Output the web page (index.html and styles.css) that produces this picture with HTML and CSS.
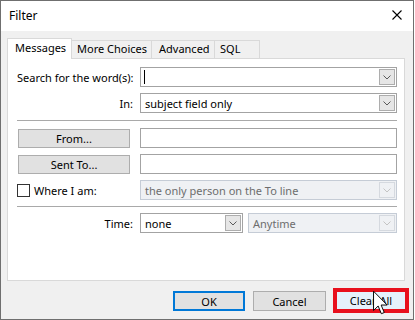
FILE: index.html
```html
<!DOCTYPE html>
<html>
<head>
<meta charset="utf-8">
<title>Filter</title>
<link rel="stylesheet" href="styles.css">
</head>
<body>
<div class="window">
  <div class="titlebar">
    <span class="title">Filter</span>
    <svg class="close" width="10" height="10" viewBox="0 0 10 10"><path d="M0.5 0.5L9.5 9.5M9.5 0.5L0.5 9.5" stroke="#000" stroke-width="1.1" fill="none"/></svg>
  </div>
  <div class="content">
    <div class="tabs">
      <div class="tab active">Messages</div>
      <div class="tab t-more">More Choices</div>
      <div class="tab t-adv">Advanced</div>
      <div class="tab t-sql">SQL</div>
    </div>
    <div class="panel">
      <div class="row">
        <div class="lbl">Search for the word(s):</div>
        <div class="combo wide"><span class="caret"></span><span class="dd"><svg width="8" height="5" viewBox="0 0 8 5"><path d="M0.5 0.5L4 4L7.5 0.5" stroke="#5a5a5a" fill="none"/></svg></span></div>
      </div>
      <div class="row">
        <div class="lbl">In:</div>
        <div class="combo wide"><span class="val">subject field only</span><span class="dd"><svg width="8" height="5" viewBox="0 0 8 5"><path d="M0.5 0.5L4 4L7.5 0.5" stroke="#5a5a5a" fill="none"/></svg></span></div>
      </div>
      <div class="sep sep1"></div>
      <div class="row">
        <div class="lbl-cell"><button class="btn side">From...</button></div>
        <div class="input wide"></div>
      </div>
      <div class="row">
        <div class="lbl-cell"><button class="btn side">Sent To...</button></div>
        <div class="input wide"></div>
      </div>
      <div class="row">
        <div class="lbl-cell check"><span class="box"></span><span>Where I am:</span></div>
        <div class="combo wide disabled"><span class="val">the only person on the To line</span><span class="dd"><svg width="8" height="5" viewBox="0 0 8 5"><path d="M0.5 0.5L4 4L7.5 0.5" stroke="#c4c4c4" fill="none"/></svg></span></div>
      </div>
      <div class="sep sep2"></div>
      <div class="row">
        <div class="lbl">Time:</div>
        <div class="combo none"><span class="val">none</span><span class="dd"><svg width="8" height="5" viewBox="0 0 8 5"><path d="M0.5 0.5L4 4L7.5 0.5" stroke="#5a5a5a" fill="none"/></svg></span></div>
        <div class="combo anytime disabled"><span class="val">Anytime</span><span class="dd"><svg width="8" height="5" viewBox="0 0 8 5"><path d="M0.5 0.5L4 4L7.5 0.5" stroke="#c4c4c4" fill="none"/></svg></span></div>
      </div>
    </div>
    <div class="footer">
      <button class="btn ok">OK</button>
      <button class="btn cancel">Cancel</button>
      <button class="btn clear">Clear All</button>
    </div>
  </div>
</div>
<svg class="cursor" width="15" height="26" viewBox="0 0 14 23"><path d="M0.5 0.5V18.5L4.8 14.3L7.8 21.5L10.5 20.4L7.6 13.4H13.2Z" fill="#fff" stroke="#000" stroke-width="0.9" stroke-linejoin="miter"/></svg>
</body>
</html>
```
FILE: styles.css
```css
* { box-sizing: border-box; }
html, body { margin: 0; padding: 0; }
body {
  position: relative;
  width: 415px;
  height: 320px;
  overflow: hidden;
  background: #fff;
  font-family: "Noto Sans", "Open Sans", sans-serif;
  font-size: 11px;
  color: #000;
}
.window {
  width: 414px;
  height: 320px;
  border: 1px solid #6f6f6f;
  background: #f0f0f0;
  display: flex;
  flex-direction: column;
}
.titlebar {
  height: 30px;
  flex: none;
  background: #fff;
  display: flex;
  justify-content: space-between;
  align-items: flex-start;
  padding: 0 11px 0 8px;
}
.title { font-size: 12px; line-height: 30px; }
.close { margin-top: 9px; }
.content { padding: 7px 0 0 6px; }
.tabs {
  position: relative;
  z-index: 1;
  display: flex;
  align-items: flex-end;
  height: 20px;
}
.tab {
  height: 18px;
  line-height: 16px;
  border-top: 1px solid #d9d9d9;
  border-right: 1px solid #d9d9d9;
  background: #f0f0f0;
  padding-left: 5px;
  white-space: nowrap;
}
.tab.active {
  width: 65px;
  height: 21px;
  margin-bottom: -1px;
  line-height: 18px;
  background: #fff;
  border-left: 1px solid #d9d9d9;
  padding-left: 7px;
}
.t-more { width: 80px; }
.t-adv { width: 63px; padding-left: 7px; }
.t-sql { width: 45px; }
.panel {
  width: 398px;
  height: 223px;
  background: #fff;
  border: 1px solid #d9d9d9;
  padding: 8px 7px 0 9px;
  display: flex;
  flex-direction: column;
  gap: 6px;
}
.row {
  display: flex;
  align-items: center;
  gap: 7px;
  height: 20px;
}
.lbl {
  width: 116px;
  text-align: right;
  white-space: nowrap;
}
.lbl-cell { width: 116px; display: flex; align-items: center; }
.check { gap: 4px; }
.box {
  width: 13px;
  height: 13px;
  border: 1px solid #333;
  background: #fff;
}
.sep { height: 1px; background: #a9a9a9; }
.sep1 { margin: 1px 0 1px; }
.combo {
  height: 20px;
  display: flex;
  align-items: center;
  border: 1px solid #a3a3a3;
  background: #fff;
  padding-left: 4px;
  white-space: nowrap;
}
.wide { width: 257px; }
.none { width: 103px; }
.anytime { width: 149px; margin-left: -2px; }
.input {
  height: 20px;
  border: 1px solid #a3a3a3;
  background: #fff;
}
.caret { width: 1px; height: 14px; background: #000; margin-left: -1px; }
.dd {
  margin-left: auto;
  margin-right: 1px;
  width: 16px;
  height: 16px;
  background: #e6e6e6;
  border: 1px solid #adadad;
  display: flex;
  align-items: center;
  justify-content: center;
}
.disabled {
  background: #eff1f4;
  border-color: #c5ccd6;
  color: #6d6d6d;
}
.disabled .dd { background: #eff1f4; border-color: #d5d9df; }
.btn {
  font: inherit;
  color: #000;
  height: 20px;
  padding: 0;
  background: #e1e1e1;
  border: 1px solid #adadad;
}
.side { width: 112px; height: 19px; margin-left: 1px; }
.footer {
  width: 398px;
  margin-top: 10px;
  display: flex;
  justify-content: flex-end;
  align-items: flex-start;
}
.ok { width: 72px; border: 2px solid #0078d7; }
.cancel { width: 73px; margin-left: 8px; }
.clear {
  width: 68px;
  height: 17px;
  margin: 1px 0 0 11px;
  background: #e5f1fb;
  border: 1px solid #e5f1fb;
  outline: 4px solid #e8101c;
}
.cursor { position: absolute; left: 373px; top: 290px; }
```
